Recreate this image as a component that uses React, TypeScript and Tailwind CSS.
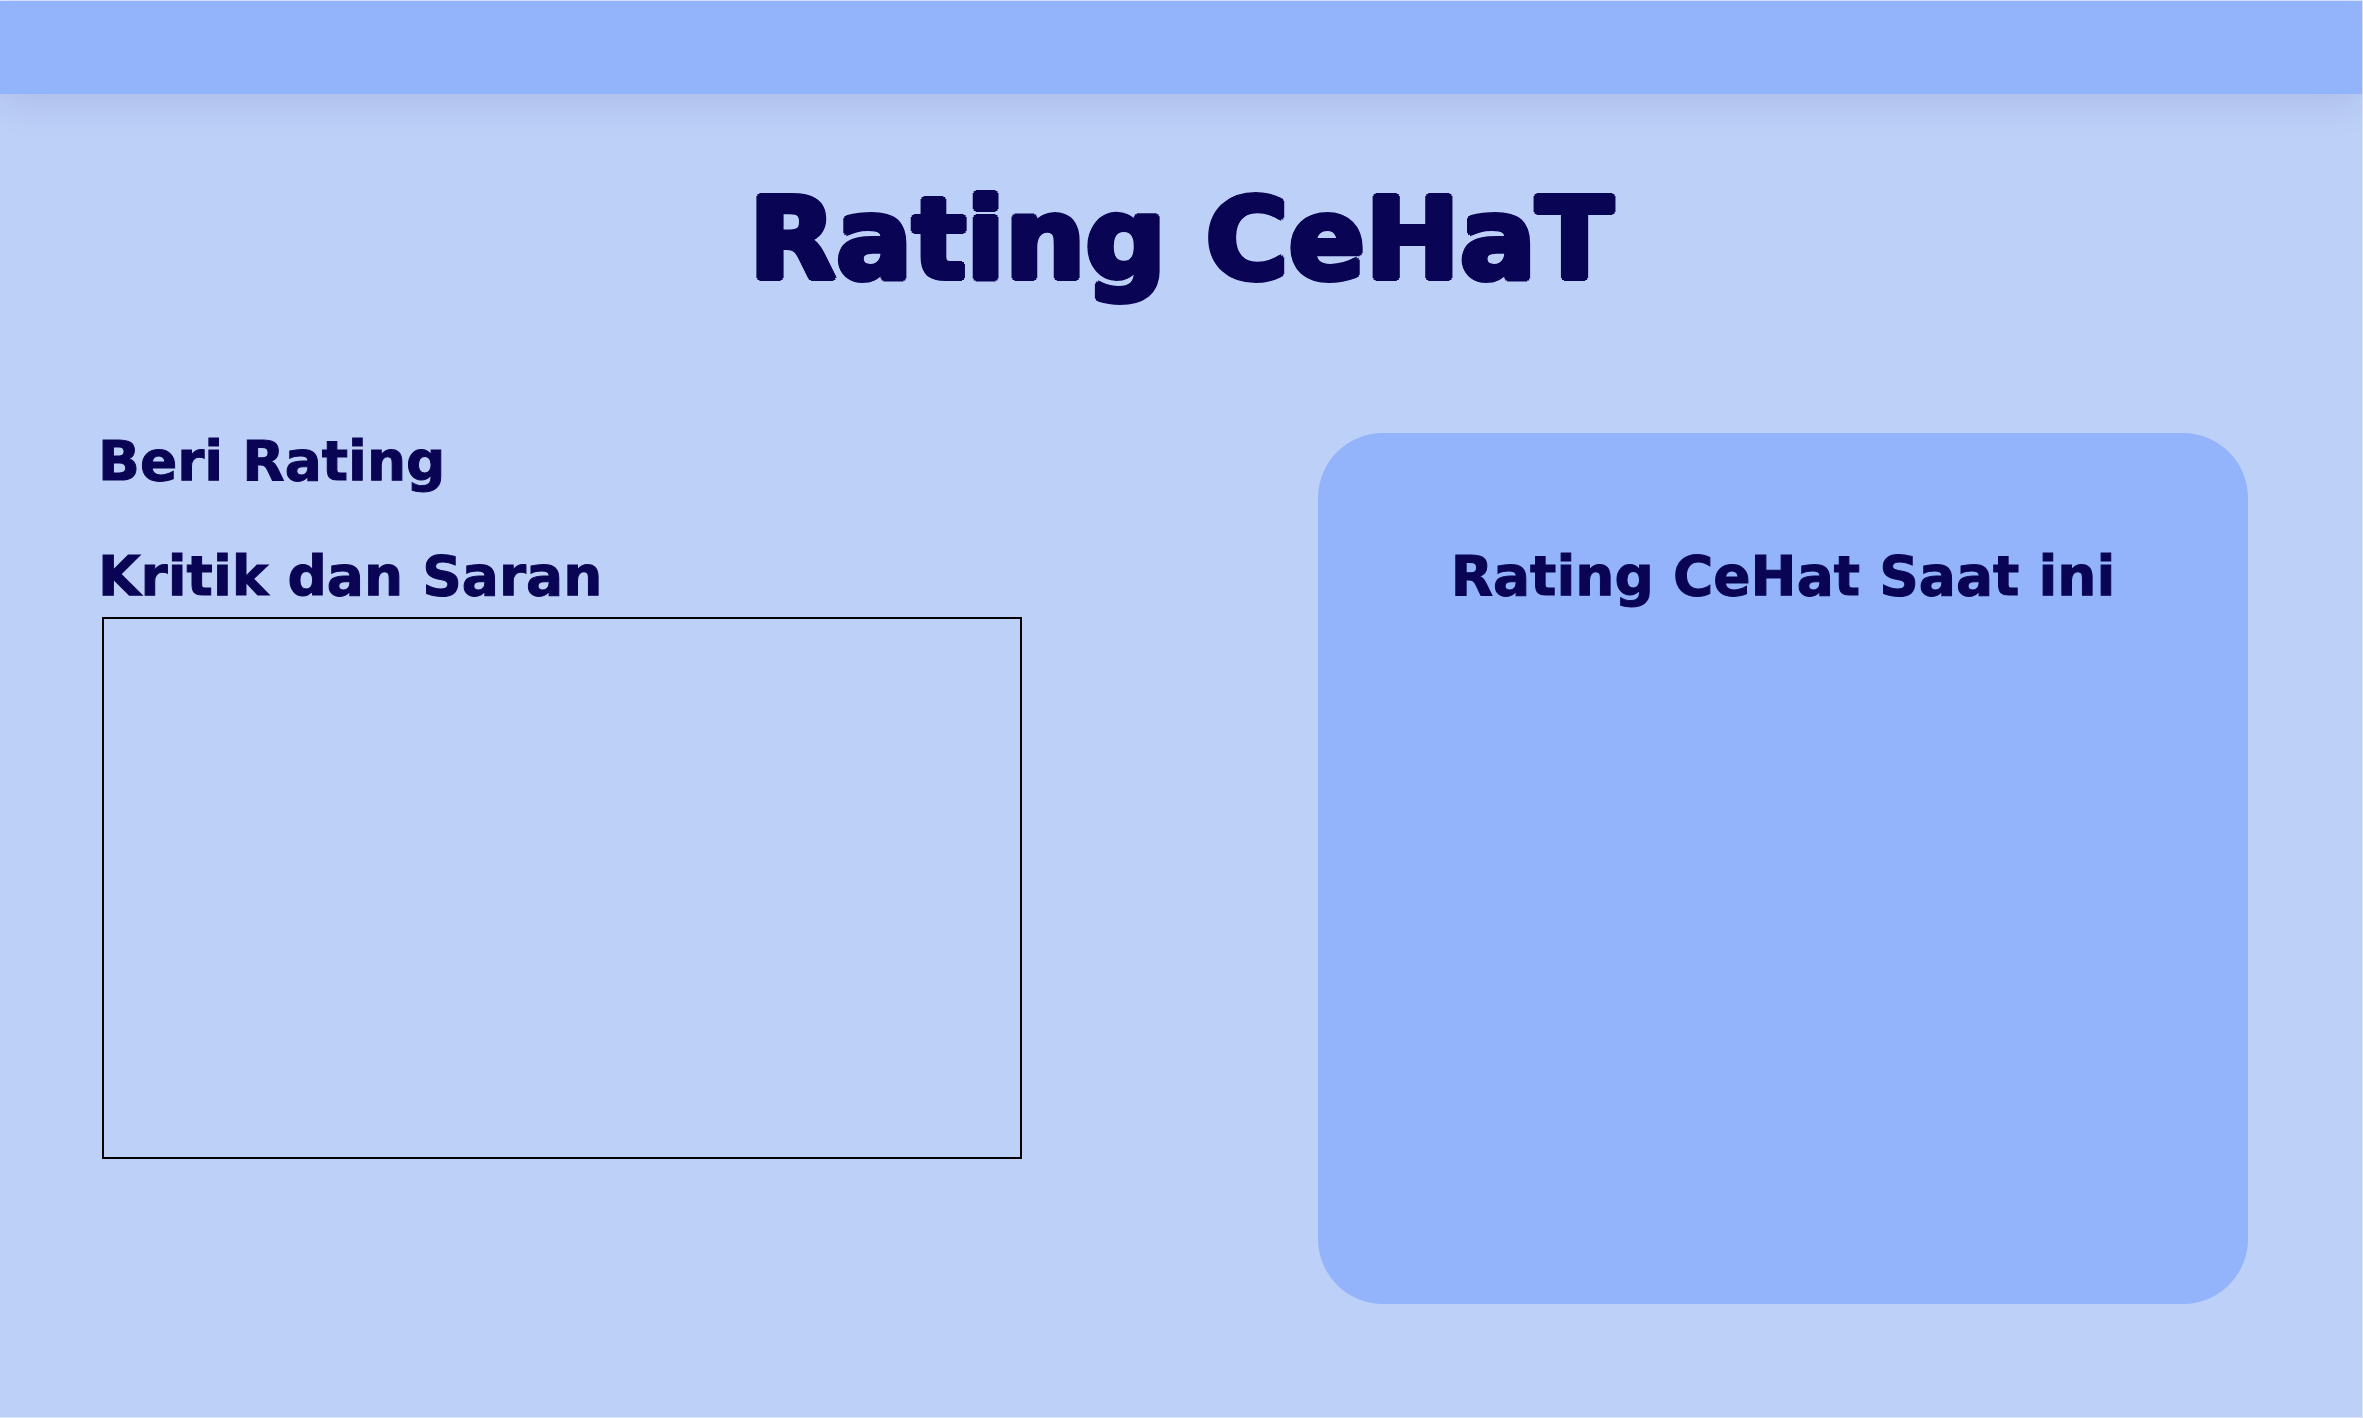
const sectionTitle =
  "text-[55px] leading-[56px] font-bold whitespace-nowrap [-webkit-text-stroke:1px_#0a0454]";

export default function App() {
  return (
    <div className="flex min-h-screen flex-col border-y border-r border-[#dbe7fb] bg-[#bdd0f8] font-['DejaVu_Sans',sans-serif] text-[#0a0454]">
      <header className="h-[93px] shrink-0 bg-[#93b3fa] shadow-[0_6px_40px_rgba(20,0,80,0.11)]" />

      <main className="flex flex-col pt-20">
        <h1 className="text-center text-[113px] leading-[130px] font-bold [text-shadow:3px_0_#0a0454,-3px_0_#0a0454,0_3px_#0a0454,0_-3px_#0a0454,2px_2px_#0a0454,-2px_2px_#0a0454,2px_-2px_#0a0454,-2px_-2px_#0a0454]">
          Rating CeHaT
        </h1>

        <div className="mt-[129px] grid grid-cols-[924fr_930fr] gap-x-[296px] pr-[114px] pl-[98px]">
          <form className="flex flex-col">
            <h2 className={sectionTitle}>Beri Rating</h2>
            <label htmlFor="feedback" className={`mt-[59px] ${sectionTitle}`}>
              Kritik dan Saran
            </label>
            <textarea
              id="feedback"
              className="mt-[13px] ml-1 h-[542px] resize-none border-2 border-black bg-transparent p-4 text-3xl outline-none"
            />
          </form>

          <section className="min-h-[871px] rounded-[65px] bg-[#93b3fa] pt-[115px] text-center">
            <h2 className={sectionTitle}>Rating CeHat Saat ini</h2>
          </section>
        </div>
      </main>
    </div>
  );
}
